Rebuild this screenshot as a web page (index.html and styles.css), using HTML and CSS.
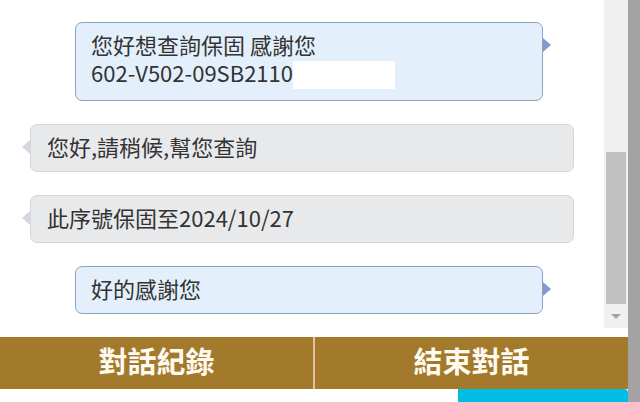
FILE: index.html
```html
<!DOCTYPE html>
<html lang="zh-Hant">
<head>
    <meta charset="UTF-8">
    <meta name="viewport" content="width=device-width, initial-scale=1.0">
    <title>客服對話</title>
    <link rel="stylesheet" href="styles.css">
</head>
<body>
    <div class="page">
        <div class="main">
            <div class="chat">
                <div class="messages">
                    <div class="msg user">您好想查詢保固 感謝您<br>602-V502-09SB2110<span class="mask"></span></div>
                    <div class="msg bot">您好,請稍候,幫您查詢</div>
                    <div class="msg bot">此序號保固至2024/10/27</div>
                    <div class="msg user">好的感謝您</div>
                </div>
                <div class="scrollbar">
                    <div class="track">
                        <div class="thumb"></div>
                    </div>
                    <div class="arrow-down"></div>
                </div>
            </div>

            <div class="actions">
                <button class="action">對話紀錄</button>
                <button class="action">結束對話</button>
            </div>

            <div class="footer">
                <div class="send"></div>
            </div>
        </div>
        <div class="edge"></div>
    </div>
</body>
</html>
```

FILE: styles.css
```css
html, body {
    margin: 0;
    padding: 0;
    background: #ffffff;
    overflow: hidden;
}
body {
    font-family: "Noto Sans CJK TC", "Noto Sans", sans-serif;
    color: #333;
}
.page {
    display: flex;
    width: 640px;
    height: 402px;
}
.main {
    width: 628px;
    display: flex;
    flex-direction: column;
}
.edge {
    flex: 1;
    background: #a3a3a3;
}

/* chat area */
.chat {
    height: 337px;
    display: flex;
}
.messages {
    flex: 1;
    display: flex;
    flex-direction: column;
    gap: 23px;
    padding-top: 22px;
}
.msg {
    position: relative;
    font-size: 22px;
    line-height: 28px;
    padding: 7px 15px 11px;
    border-radius: 7px;
    white-space: nowrap;
}
.msg::after {
    content: "";
    position: absolute;
    top: 15px;
    border-top: 7px solid transparent;
    border-bottom: 7px solid transparent;
}
.user {
    margin-left: 75px;
    width: 436px;
    background: #e3effb;
    border: 1px solid #8ea2bd;
}
.user::after {
    right: -9px;
    border-left: 8px solid #7f9bcf;
}
.bot {
    margin-left: 30px;
    width: 511px;
    padding-left: 16px;
    background: #e8e9eb;
    border: 1px solid #d6d7d9;
}
.bot::after {
    left: -9px;
    border-right: 8px solid #d3d8e0;
}
.mask {
    display: inline-block;
    width: 102px;
    height: 28px;
    background: #ffffff;
    vertical-align: -7px;
}

/* fake scrollbar */
.scrollbar {
    width: 24px;
    height: 328px;
    background: #f0f0f0;
    display: flex;
    flex-direction: column;
}
.track {
    flex: 1;
    padding: 152px 2px 0;
}
.thumb {
    height: 152px;
    background: #c1c1c1;
}
.arrow-down {
    height: 24px;
    display: flex;
    align-items: center;
    justify-content: center;
}
.arrow-down::before {
    content: "";
    border-left: 5px solid transparent;
    border-right: 5px solid transparent;
    border-top: 5px solid #a3a3a3;
}

/* bottom buttons */
.actions {
    display: flex;
    height: 52px;
    background: #a3792c;
}
.action {
    flex: 1;
    border: none;
    background: transparent;
    color: #fffaf0;
    font-family: "Noto Sans CJK TC", sans-serif;
    font-size: 29px;
    font-weight: bold;
    padding: 0 0 6px;
    cursor: pointer;
}
.action + .action {
    border-left: 2px solid #dcc49a;
}
.footer {
    flex: 1;
    display: flex;
    justify-content: flex-end;
}
.send {
    width: 170px;
    background: #00bde6;
    border-top-right-radius: 4px;
}
```
